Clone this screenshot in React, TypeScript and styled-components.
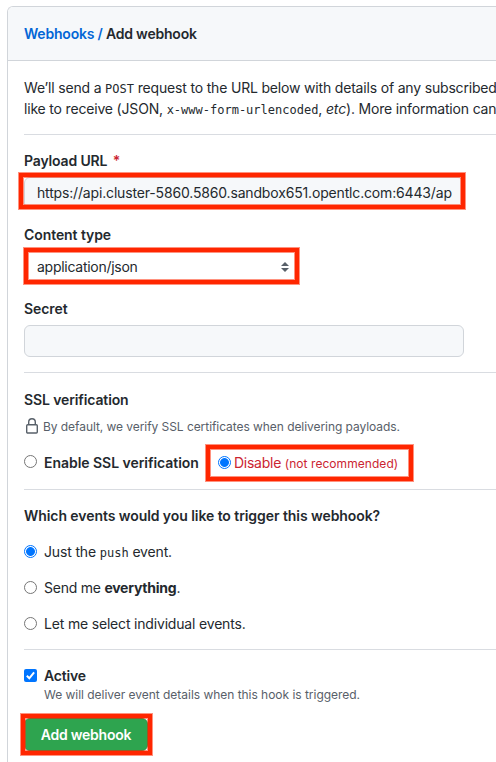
import React from "react";
import styled, { createGlobalStyle, css } from "styled-components";

const GlobalStyle = createGlobalStyle`
  * { box-sizing: border-box; }
  body {
    margin: 0;
    background: #fff;
    overflow: hidden;
    color: #24292e;
    font: 14px/21px Inter, "Liberation Sans", sans-serif;
  }
`;

const Page = styled.main`
  height: 762px;
  padding: 6px 0 0 7px;
  overflow: hidden;
`;

const Panel = styled.section`
  height: 780px;
  border: 1px solid #d1d5da;
  border-right: 0;
  border-radius: 6px 0 0 0;
  overflow: hidden;
`;

const Header = styled.header`
  height: 54px;
  padding: 16px;
  background: #f6f8fa;
  border-bottom: 1px solid #d1d5da;
  font-weight: 600;
  letter-spacing: -0.21px;
  white-space: nowrap;
  span { color: #0366d6; }
`;

const Body = styled.div`
  padding: 16px 0 0 16px;
`;

const Intro = styled.p<{ $track: number }>`
  margin: 0;
  height: 21px;
  white-space: nowrap;
  letter-spacing: ${(p) => p.$track}px;
`;

const Code = styled.code`
  font: 12px/18px "DejaVu Sans Mono", "Liberation Mono", monospace;
  letter-spacing: 0;
`;

const Rule = styled.hr<{ $top: number; $bottom: number }>`
  height: 1px;
  border: 0;
  background: #d9dce1;
  margin: ${(p) => p.$top}px 0 ${(p) => p.$bottom}px;
`;

const Label = styled.div<{ $track: number }>`
  height: 21px;
  font-weight: 600;
  white-space: nowrap;
  letter-spacing: ${(p) => p.$track}px;
  i { color: #cb2431; font-style: normal; margin-left: 2px; }
`;

const marked = css`
  position: relative;
  &::after {
    content: "";
    position: absolute;
    border: 4px solid #ff2600;
    box-shadow: 0 0 0 1px rgba(255, 38, 0, 0.5), inset 0 0 0 1px rgba(255, 38, 0, 0.5);
    pointer-events: none;
  }
`;

const Field = styled.div`
  width: 440px;
  height: 32px;
  padding: 5px 12px;
  border: 1px solid #d1d5da;
  border-radius: 6px;
  background: #f6f8fa;
  line-height: 20px;
  white-space: nowrap;
`;

const UrlField = styled(Field)`
  ${marked}
  margin: 6px 0 15px;
  letter-spacing: -0.165px;
  &::after { inset: -5px -2px -1px -6px; }
`;

const SecretField = styled(Field)`
  margin: 6px 0 15px;
`;

const Select = styled.div`
  ${marked}
  display: flex;
  align-items: center;
  justify-content: space-between;
  width: 272px;
  height: 32px;
  margin: 6px 0 15px;
  padding: 0 7px 0 13px;
  letter-spacing: -0.27px;
  span { margin-top: -2px; }
  &::after { inset: -3px -3px -1px 0; }
`;

const Hint = styled.div<{ $track: number }>`
  display: flex;
  align-items: center;
  height: 18px;
  color: #586069;
  font-size: 12px;
  line-height: 18px;
  white-space: nowrap;
  letter-spacing: ${(p) => p.$track}px;
`;

const SslHint = styled(Hint)`
  margin-top: 8px;
  svg { margin: 0 3px 2px 0; }
`;

const SslRow = styled.div`
  display: flex;
  height: 21px;
  margin-top: 16px;
  white-space: nowrap;
`;

const EnableOption = styled.div`
  display: flex;
  width: 194px;
  font-weight: 600;
  letter-spacing: -0.04px;
`;

const DisableOption = styled.div`
  ${marked}
  display: flex;
  width: 184px;
  color: #cb2431;
  letter-spacing: -0.26px;
  &::after { inset: -7px -11px -8px -12px; }
  small { font-size: 12px; letter-spacing: 0.06px; }
`;

const Option = styled.div<{ $track: number }>`
  display: flex;
  height: 21px;
  margin-top: 15px;
  white-space: nowrap;
  letter-spacing: ${(p) => p.$track}px;
`;

const Radio = styled.span<{ $on?: boolean; $gap?: number; $top?: number }>`
  flex: none;
  width: 13px;
  height: 13px;
  margin: ${(p) => p.$top ?? 4}px ${(p) => p.$gap ?? 7}px 0 0;
  border: 1px solid ${(p) => (p.$on ? "#0075ff" : "#767676")};
  border-radius: 50%;
  background: ${(p) => (p.$on ? "radial-gradient(circle, #0075ff 4px, #fff 4.8px)" : "#fff")};
`;

const CheckRow = styled.div`
  display: flex;
  height: 21px;
  font-weight: 600;
  letter-spacing: -0.2px;
  svg { flex: none; margin: 4px 7px 0 0; }
`;

const ActiveHint = styled(Hint)`
  margin: 0 0 0 20px;
`;

const Submit = styled.button`
  ${marked}
  display: block;
  width: 124px;
  height: 33px;
  margin: 14px 0 0;
  padding: 0;
  border: 1px solid #2b9248;
  border-radius: 6px;
  background: #2ea44f;
  color: #fff;
  font: 600 14px/20px Inter, "Liberation Sans", sans-serif;
  letter-spacing: -0.24px;
  &::after { inset: -5px -5px -5px -4px; }
`;

export default function App() {
  return (
    <>
      <GlobalStyle />
      <Page>
        <Panel>
          <Header><span>Webhooks /</span> Add webhook</Header>
          <Body>
            <Intro $track={-0.18}>We’ll send a <Code>POST</Code> request to the URL below with details of any subscribed</Intro>
            <Intro $track={-0.18}>like to receive (JSON, <Code>x-www-form-urlencoded</Code>, <em>etc</em>). More information can</Intro>
            <Rule $top={15} $bottom={15} />
            <Label $track={-0.15}>Payload URL <i>*</i></Label>
            <UrlField>https://api.cluster-5860.5860.sandbox651.opentlc.com:6443/ap</UrlField>
            <Label $track={-0.08}>Content type</Label>
            <Select>
              <span>application/json</span>
              <svg width="8" height="10" viewBox="0 0 8 10" fill="#586069">
                <path d="M0 4 4 0l4 4zM0 6h8L4 10z" />
              </svg>
            </Select>
            <Label $track={-0.08}>Secret</Label>
            <SecretField />
            <Rule $top={0} $bottom={16} />
            <Label $track={-0.12}>SSL verification</Label>
            <SslHint $track={-0.06}>
              <svg width="16" height="16" viewBox="0 0 16 16" fill="none" stroke="#586069" strokeWidth="1.4">
                <rect x="2.7" y="6.7" width="10.6" height="8.3" rx="1" />
                <path d="M4.7 6.7V4a3.3 3.3 0 0 1 6.6 0v2.7" />
              </svg>
              By default, we verify SSL certificates when delivering payloads.
            </SslHint>
            <SslRow>
              <EnableOption><Radio $top={3} />Enable SSL verification</EnableOption>
              <DisableOption><Radio $on $gap={3} /><span>Disable <small>(not recommended)</small></span></DisableOption>
            </SslRow>
            <Rule $top={16} $bottom={15} />
            <Label $track={-0.07}>Which events would you like to trigger this webhook?</Label>
            <Option $track={-0.16}><Radio $on /><span>Just the <Code>push</Code> event.</span></Option>
            <Option $track={-0.24}><Radio /><span>Send me <b>everything</b>.</span></Option>
            <Option $track={-0.18}><Radio /><span>Let me select individual events.</span></Option>
            <Rule $top={15} $bottom={15} />
            <CheckRow>
              <svg width="13" height="13" viewBox="0 0 13 13">
                <rect width="13" height="13" rx="2" fill="#0075ff" />
                <path d="m2.8 6.8 2.5 2.5 4.8-6" fill="none" stroke="#fff" strokeWidth="2" />
              </svg>
              Active
            </CheckRow>
            <ActiveHint $track={-0.03}>We will deliver event details when this hook is triggered.</ActiveHint>
            <Submit>Add webhook</Submit>
          </Body>
        </Panel>
      </Page>
    </>
  );
}
